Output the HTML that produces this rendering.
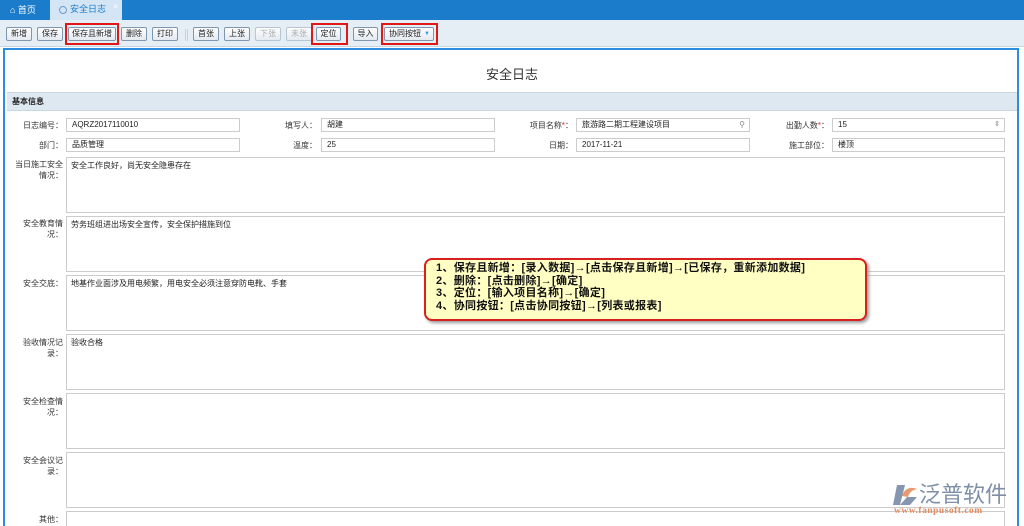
<!DOCTYPE html>
<html><head><meta charset="utf-8"><style>
*{margin:0;padding:0;box-sizing:border-box}
html,body{width:1024px;height:526px;overflow:hidden}
body{background:#fff;font-family:"Liberation Sans","Noto Sans CJK SC",sans-serif;font-size:9px;color:#222;position:relative}
.tabs{position:absolute;left:0;top:0;width:1024px;height:20px;background:#1b7ccc}
.tab1{position:absolute;left:2px;top:2px;width:46px;height:18px;color:#fff;font-size:9px;line-height:16px;padding-left:8px}
.tab2{position:absolute;left:50px;top:0;width:72px;height:20px;background:#d4e5f5;color:#1b7ccc;line-height:19px;padding-left:20px;font-size:9px}
.tab2:before{content:"";position:absolute;left:9px;top:6px;width:6px;height:6px;border:1px solid #6a9ccc;border-radius:50%}
.tab2 i{position:absolute;right:4px;top:-3px;font-style:normal;color:#fff;font-size:8px}
.tb{position:absolute;left:0;top:20px;width:1024px;height:27px;background:#e6eef5;border-bottom:1px solid #c5d5e4}
.b{position:absolute;top:27px;height:14px;border:1px solid #7f97ae;border-radius:2px;background:linear-gradient(#fdfdfd,#e4ebf2);font-size:8px;line-height:12px;text-align:center;color:#222;white-space:nowrap}
.b.d{color:#aaa;border-color:#b8c6d3}
.r{position:absolute;border:2px solid #e01818}
.frame{position:absolute;left:3px;top:48px;width:1016px;height:478px;border:2px solid #2d8de0;border-bottom:none;background:#fff}
.title{position:absolute;left:0;top:64px;width:1024px;text-align:center;font-size:13px;color:#333}
.sec{position:absolute;left:7px;top:92px;width:1010px;height:19px;background:#dee8f1;border-top:1px solid #c9d7e4;border-bottom:1px solid #c9d7e4;font-size:8px;font-weight:bold;line-height:17px;padding-left:5px}
.lb{position:absolute;text-align:right;font-size:8px;color:#333;line-height:11px}
.in{position:absolute;height:14px;border:1px solid #ccc;font-size:8px;line-height:12px;padding-left:5px;color:#222;background:#fff}
.ta{position:absolute;left:66px;width:939px;height:56px;border:1px solid #ccc;font-size:8px;padding:2px 4px;line-height:11px}
.req{color:#e22}
.call{position:absolute;left:424px;top:258px;width:443px;height:63px;background:#ffffc4;border:2px solid #d92020;border-radius:8px;box-shadow:2px 2px 3px #999;padding:2px 10px;font-size:11px;font-weight:bold;line-height:12.7px;color:#111;white-space:nowrap;letter-spacing:0.3px;overflow:hidden}
.logo{position:absolute;left:893px;top:480px;width:131px;height:46px}
</style></head><body>
<div class="tabs">
<div class="tab1">⌂ 首页</div>
<div class="tab2">安全日志<i>×</i></div>
</div>
<div class="tb"></div>
<div class="b" style="left:6px;width:26px">新增</div>
<div class="b" style="left:37px;width:26px">保存</div>
<div class="b" style="left:68px;width:48px">保存且新增</div>
<div class="b" style="left:121px;width:26px">删除</div>
<div class="b" style="left:152px;width:26px">打印</div>
<div style="position:absolute;left:185px;top:29px;width:3px;height:12px;border-left:1px solid #c7d2dc;border-right:1px solid #c7d2dc"></div>
<div class="b" style="left:193px;width:26px">首张</div>
<div class="b" style="left:224px;width:26px">上张</div>
<div class="b d" style="left:255px;width:26px">下张</div>
<div class="b d" style="left:286px;width:26px">末张</div>
<div class="b" style="left:316px;width:25px">定位</div>
<div class="b" style="left:353px;width:25px">导入</div>
<div class="b" style="left:384px;width:50px;text-align:left;padding-left:4px">协同按钮<span style="position:absolute;left:39px;top:0;color:#29a0e8;font-size:6px">▼</span></div>
<div class="r" style="left:65px;top:23px;width:54px;height:22px"></div>
<div class="r" style="left:311px;top:23px;width:37px;height:22px"></div>
<div class="r" style="left:381px;top:23px;width:57px;height:22px"></div>
<div class="frame"></div>
<div class="title">安全日志</div>
<div class="sec">基本信息</div>

<div class="lb" style="left:10px;width:53px;top:120px">日志编号：</div>
<div class="in" style="left:66px;top:118px;width:174px">AQRZ2017110010</div>
<div class="lb" style="left:260px;width:57px;top:120px">填写人：</div>
<div class="in" style="left:321px;top:118px;width:174px">胡建</div>
<div class="lb" style="left:500px;width:73px;top:120px">项目名称<span class="req">*</span>：</div>
<div class="in" style="left:576px;top:118px;width:174px">旅游路二期工程建设项目<span style="position:absolute;right:4px;top:0;color:#888">⚲</span></div>
<div class="lb" style="left:760px;width:69px;top:120px">出勤人数<span class="req">*</span>：</div>
<div class="in" style="left:832px;top:118px;width:173px">15<span style="position:absolute;right:4px;top:0;color:#888;font-size:7px">⇕</span></div>

<div class="lb" style="left:10px;width:53px;top:140px">部门：</div>
<div class="in" style="left:66px;top:138px;width:174px">品质管理</div>
<div class="lb" style="left:260px;width:57px;top:140px">温度：</div>
<div class="in" style="left:321px;top:138px;width:174px">25</div>
<div class="lb" style="left:500px;width:73px;top:140px">日期：</div>
<div class="in" style="left:576px;top:138px;width:174px">2017-11-21</div>
<div class="lb" style="left:760px;width:69px;top:140px">施工部位：</div>
<div class="in" style="left:832px;top:138px;width:173px">楼顶</div>

<div class="lb" style="left:8px;width:55px;top:159px">当日施工安全情况：</div>
<div class="ta" style="top:157px">安全工作良好，尚无安全隐患存在</div>
<div class="lb" style="left:8px;width:55px;top:218px">安全教育情况：</div>
<div class="ta" style="top:216px">劳务班组进出场安全宣传，安全保护措施到位</div>
<div class="lb" style="left:8px;width:55px;top:278px">安全交底：</div>
<div class="ta" style="top:275px">地基作业面涉及用电频繁，用电安全必须注意穿防电靴、手套</div>
<div class="lb" style="left:8px;width:55px;top:337px">验收情况记录：</div>
<div class="ta" style="top:334px">验收合格</div>
<div class="lb" style="left:8px;width:55px;top:396px">安全检查情况：</div>
<div class="ta" style="top:393px"></div>
<div class="lb" style="left:8px;width:55px;top:455px">安全会议记录：</div>
<div class="ta" style="top:452px"></div>
<div class="lb" style="left:8px;width:55px;top:514px">其他：</div>
<div class="ta" style="top:511px;height:15px;border-bottom:none"></div>

<div class="call">1、保存且新增：[录入数据]→[点击保存且新增]→[已保存，重新添加数据]<br>2、删除：[点击删除]→[确定]<br>3、定位：[输入项目名称]→[确定]<br>4、协同按钮：[点击协同按钮]→[列表或报表]</div>

<div class="logo">
<svg style="position:absolute;left:0;top:4px" width="26" height="22" viewBox="0 0 26 22"><path d="M4 1h8l-5 20H0z" fill="#8796b0"/><path d="M9 12c2-7 8-10 15-7-5 1-8 4-9 8z" fill="#e59a72"/><path d="M7 21l7-8h10l-7 8z" fill="#8796b0"/></svg>
<div style="position:absolute;left:26px;top:0;font-size:22px;color:#7f8fa8;font-family:'Noto Sans CJK SC',sans-serif;line-height:26px;white-space:nowrap">泛普软件</div>
<div style="position:absolute;left:1px;top:26px;font-size:9.5px;color:#e08a5f;font-family:'Liberation Serif',serif;font-weight:bold;letter-spacing:0.5px;white-space:nowrap">www.fanpusoft.com</div>
</div>
</body></html>
